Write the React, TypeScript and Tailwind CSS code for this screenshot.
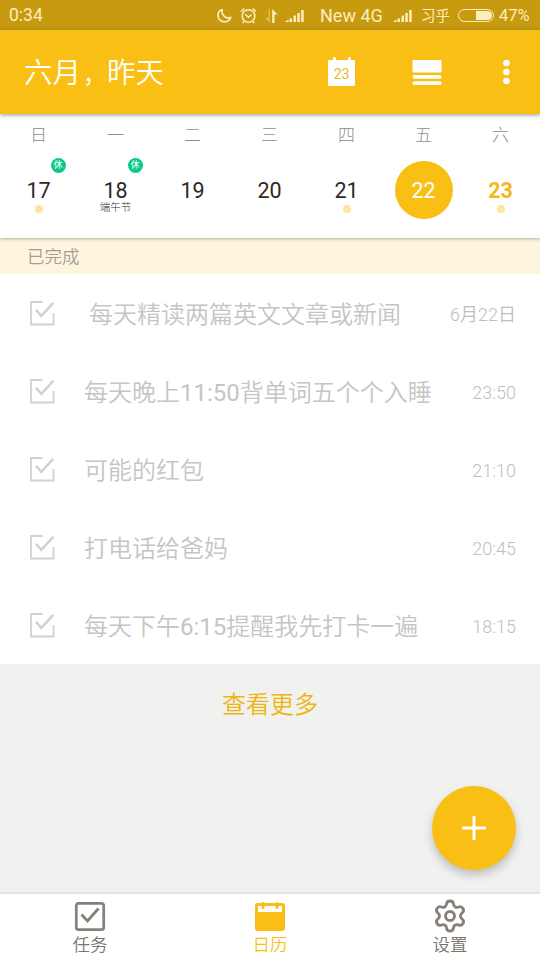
import clsx from "clsx";
import { Settings } from "lucide-react";

const days = [
  { week: "日", date: 17, rest: true, dot: true },
  { week: "一", date: 18, rest: true, note: "端午节" },
  { week: "二", date: 19 },
  { week: "三", date: 20 },
  { week: "四", date: 21, dot: true },
  { week: "五", date: 22, selected: true },
  { week: "六", date: 23, today: true, dot: true },
];

const tasks = [
  { title: "每天精读两篇英文文章或新闻", time: "6月22日", indent: true },
  { title: "每天晚上11:50背单词五个个入睡", time: "23:50" },
  { title: "可能的红包", time: "21:10" },
  { title: "打电话给爸妈", time: "20:45" },
  { title: "每天下午6:15提醒我先打卡一遍", time: "18:15" },
];

// digits are set in regular weight, the Chinese text around them is lighter
function MixedText({ text }: { text: string }) {
  return (
    <>
      {text.split(/([\d:]+)/).map((part, i) =>
        i % 2 ? <span key={i} className="font-normal">{part}</span> : part
      )}
    </>
  );
}

function Signal() {
  return (
    <svg width="19" height="13" viewBox="0 0 19 13" fill="currentColor" className="shrink-0">
      <path d="M0 13h3.500v-2.500zM4.500 9.500h2.500V13H4.500zM8.500 6.500h2.500V13H8.500zM12.300 4h2.500v9h-2.500zM16.200 1h2.500v12h-2.500z" />
    </svg>
  );
}

function StatusBar() {
  return (
    <div className="h-[30px] shrink-0 bg-[#c79a0f] text-[#fdeec0] flex items-center pl-[9px] pr-[9px] pt-px text-[17.5px] leading-[29px] whitespace-nowrap">
      <span className="w-[208px] shrink-0">0:34</span>
      <svg width="15" height="15" viewBox="0 0 15 15" fill="none" stroke="currentColor" strokeWidth="1.7" strokeLinejoin="round" className="mr-[8px] shrink-0">
        <path d="M5.2 1.500C2.600 2.300 1 4.600 1 7.400 1 11 3.800 13.800 7.400 13.800c3 0 5.500-1.800 6.400-4.500C9.300 11.500 4 7 5.200 1.500z" />
      </svg>
      <svg width="17" height="17" viewBox="0 0 17 17" fill="none" stroke="currentColor" strokeWidth="1.5" className="mr-[8px] shrink-0">
        <circle cx="8.5" cy="9" r="6.3" />
        <path d="M5.3 7.5l3.2 2.8 3-2.8M1 4.5L4.3 1.5M16 4.500l-3.300-3M4 14.500l-1.300 1.600M13 14.500l1.300 1.600" />
      </svg>
      <svg width="13" height="14" viewBox="0 0 13 14" fill="currentColor" className="mr-[7px] shrink-0">
        <path d="M3.500 0H5v14L0 8.500h3.500z" opacity="0.4" />
        <path d="M7.200 0l5.300 5.500H9.500V14H7.200z" />
      </svg>
      <Signal />
      <span className="w-[73px] shrink-0 ml-[16px] text-[18px]">New 4G</span>
      <Signal />
      <span className="w-[37px] shrink-0 ml-[9px] pt-px text-[14.5px]">习乎</span>
      <div className="w-[36px] h-[13px] shrink-0 rounded-full border border-current p-px flex justify-end mr-[5px]">
        <div className="w-[16px] bg-current rounded-r-full" />
      </div>
      <span className="text-[16.5px]">47%</span>
    </div>
  );
}

function Header() {
  return (
    <header className="relative z-10 h-[84px] shrink-0 bg-[#f9bf15] text-white flex items-center pl-[24px] pr-[30px] shadow-[0_1px_4px_rgba(60,90,100,0.6)]">
      <h1 className="flex-1 pt-[5px] text-[28.5px] font-[350]">
        六月<span className="ml-[2px] text-[24px]">，</span>昨天
      </h1>
      <svg width="27" height="29" viewBox="0 0 27 29" className="mr-[57px] -mt-[2px]">
        <path d="M1 3h4V1.500a1.500 1.500 0 0 1 3 0V3h12V1.500a1.500 1.500 0 0 1 3 0V3h3a1 1 0 0 1 1 1v24a1 1 0 0 1-1 1H1a1 1 0 0 1-1-1V4a1 1 0 0 1 1-1z" fill="white" />
        <text x="13.5" y="21.5" textAnchor="middle" fontSize="14" fill="#f0b820">23</text>
      </svg>
      <svg width="30" height="25" viewBox="0 0 30 25" fill="white" className="mr-[61px]">
        <rect x="0.5" width="29" height="12.500" rx="1.2" />
        <rect x="0.5" y="15" width="29" height="3.800" rx="1.8" />
        <rect x="0.5" y="21.200" width="29" height="3.800" rx="1.8" />
      </svg>
      <svg width="7" height="26" viewBox="0 0 7 26" fill="white">
        <circle cx="3.5" cy="4" r="3.3" />
        <circle cx="3.5" cy="13" r="3.3" />
        <circle cx="3.5" cy="22" r="3.3" />
      </svg>
    </header>
  );
}

function WeekStrip() {
  return (
    <div className="relative h-[124px] shrink-0 bg-white grid grid-cols-7 pr-px shadow-[0_1px_3px_rgba(0,0,0,0.3)]">
      {days.map((d) => (
        <div key={d.date} className="flex flex-col items-center pt-[10px]">
          <span className="h-[22px] leading-[22px] text-[17px] font-light text-[#8f8d8a]">{d.week}</span>
          <div
            className={clsx(
              "relative mt-[15px] size-[58px] rounded-full flex items-center justify-center text-[21.5px] leading-[20px] pt-[2px]",
              d.selected ? "bg-[#f9bf15] text-white" : d.today ? "text-[#f3b91a] font-bold" : "text-[#2d2823]"
            )}
          >
            {d.date}
            {d.rest && (
              <span className="absolute left-[41px] -top-[3px] size-[15px] rounded-full bg-[#0bc98d] text-white text-[9px] leading-[15px] text-center">
                休
              </span>
            )}
            {d.note && (
              <span className="absolute top-[41px] text-[10.5px] leading-[12px] font-light whitespace-nowrap">{d.note}</span>
            )}
            {d.dot && <span className="absolute top-[44px] left-[25px] size-[8px] rounded-full bg-[#fde5a0]" />}
          </div>
        </div>
      ))}
    </div>
  );
}

function CheckBox() {
  return (
    <svg width="25" height="25" viewBox="0 0 25 25" fill="none" stroke="#d2d2d2" className="shrink-0">
      <path d="M12.500 1H1v22.500h22.500V12" strokeWidth="1.8" />
      <path d="M6 8.800l5.300 6L23.300 1.800" strokeWidth="2.5" />
    </svg>
  );
}

function TaskList() {
  return (
    <ul className="shrink-0 bg-white">
      {tasks.map((t) => (
        <li key={t.title} className="h-[78px] flex items-center pl-[30px] pr-[24px] text-[#c6c5c2]">
          <CheckBox />
          <span className={clsx("flex-1 text-[24px] font-[350] whitespace-nowrap mt-[4px]", t.indent ? "ml-[34px]" : "ml-[29px]")}>
            <MixedText text={t.title} />
          </span>
          <span className="text-[18px] font-[350] mt-[2px] text-[#bfbebb]">{t.time}</span>
        </li>
      ))}
    </ul>
  );
}

function BottomNav() {
  return (
    <nav className="h-[68px] shrink-0 bg-white border-t-2 border-[#e3e3e2] grid grid-cols-3 text-[17.5px] leading-[22px] font-[350] text-[#7a756e]">
      <div className="flex flex-col items-center pt-[6px]">
        <svg width="32" height="32" viewBox="0 0 32 32" fill="none" stroke="#858078" className="mb-[2px]">
          <rect x="2.3" y="3.3" width="27.400" height="26.400" rx="2.5" strokeWidth="2.7" />
          <path d="M7.500 14.500l6 6.500L24.500 8.500" strokeWidth="2.8" />
        </svg>
        <span>任务</span>
      </div>
      <div className="flex flex-col items-center pt-[6px] text-[#f9bf15]">
        <svg width="32" height="32" viewBox="0 0 32 32" className="mb-[2px]">
          <rect x="1" y="3" width="30" height="28" rx="3" fill="currentColor" />
          <rect x="4" y="6" width="24" height="6" fill="white" />
          <path d="M9 3.500v4M23 3.500v4" stroke="currentColor" strokeWidth="3" strokeLinecap="round" />
        </svg>
        <span>日历</span>
      </div>
      <div className="flex flex-col items-center pt-[6px]">
        <Settings size={36} strokeWidth={1.9} color="#858078" className="-mt-[2px]" />
        <span>设置</span>
      </div>
    </nav>
  );
}

export default function App() {
  return (
    <div className="relative w-[540px] h-[960px] flex flex-col overflow-hidden bg-[#f1f1f0] font-[Roboto,'Noto_Sans_CJK_SC',sans-serif]">
      <StatusBar />
      <Header />
      <WeekStrip />
      <div className="h-[36px] shrink-0 bg-[#fef5df] pl-[27px] leading-[38px] text-[17.5px] font-[350] text-[#a39d90]">
        已完成
      </div>
      <TaskList />
      <div className="flex-1 pt-[23px] text-center text-[24px] leading-[36px] font-[350] text-[#efb50f]">查看更多</div>
      <button className="absolute left-[432px] top-[786px] size-[84px] rounded-full bg-[#f9bf15] flex items-center justify-center shadow-[0_5px_10px_rgba(0,0,0,0.22)]">
        <svg width="24" height="24" viewBox="0 0 24 24" stroke="white" strokeWidth="3">
          <path d="M12 0v24M0 12h24" />
        </svg>
      </button>
      <BottomNav />
    </div>
  );
}
